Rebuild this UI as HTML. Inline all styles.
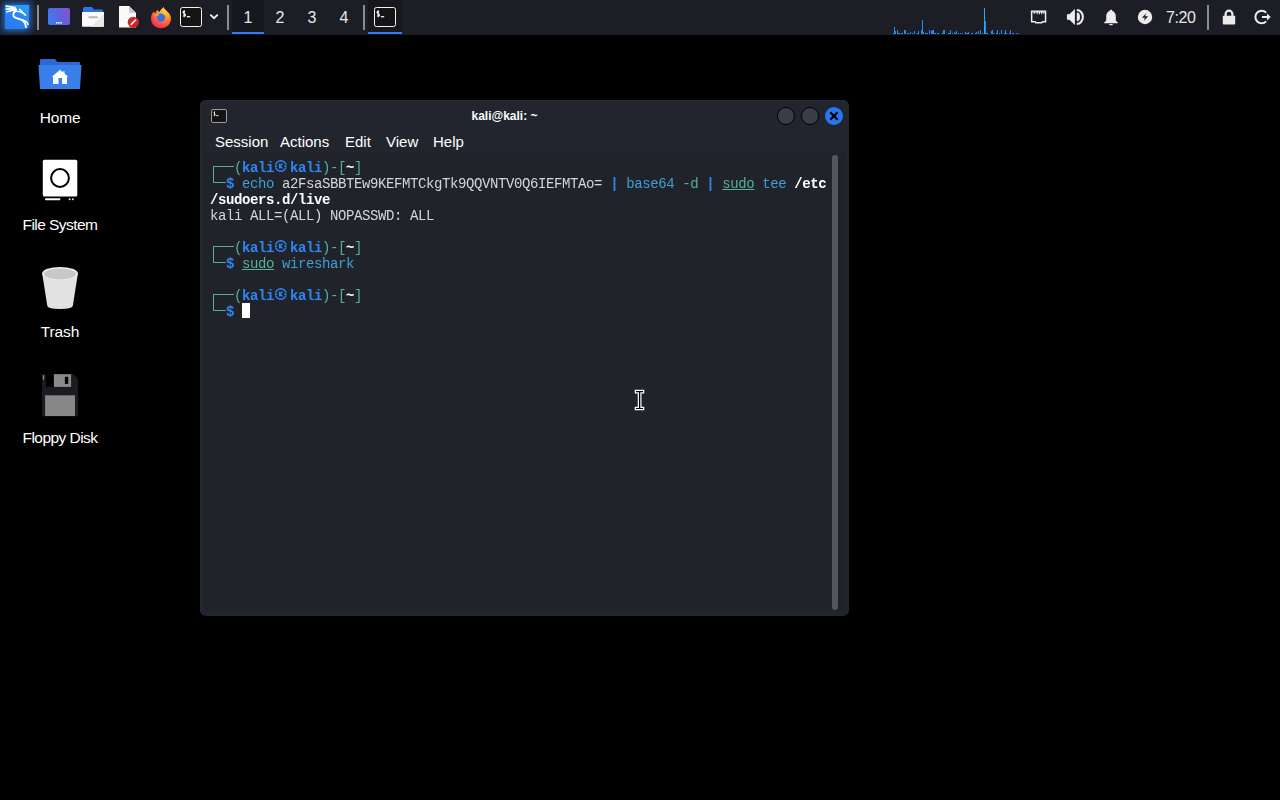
<!DOCTYPE html>
<html><head><meta charset="utf-8">
<style>
*{margin:0;padding:0;box-sizing:border-box}
html,body{width:1280px;height:800px;overflow:hidden;background:#000;font-family:"Liberation Sans",sans-serif}
.abs{position:absolute}
svg{position:absolute;overflow:visible}
#panel{position:absolute;left:0;top:0;width:1280px;height:35px;background:#1d1e25}
.sep{position:absolute;top:5px;width:2px;height:25px;background:#8c8c8c}
.ws{position:absolute;top:0;width:32px;height:35px;color:#e8e8e8;font-size:16px;text-align:center;line-height:35px}
.ws.act{background:#17181d}
.uline{position:absolute;top:32px;height:2px;background:#2f7cf6}
.dl{position:absolute;color:#fff;font-size:15.5px;letter-spacing:-0.15px;text-align:center;width:120px;left:0}
#win{position:absolute;left:200px;top:100px;width:649px;height:515.5px;background:#23252e;border-radius:6px;box-shadow:inset 1px 1px 0 #272a33, 0 0 1px 0 rgba(0,0,0,.6)}
#title{position:absolute;left:200px;top:101px;width:609px;text-align:center;color:#fff;font-weight:bold;font-size:12px;line-height:30px}
.menu{position:absolute;top:133px;color:#fff;font-size:15px}
#term{position:absolute;left:205px;top:153px;width:641px;height:458px;background:#21232b;border-top:1px solid #1f2027}
#txt{position:absolute;left:210px;top:160px;font-family:"Liberation Mono",monospace;font-size:14px;letter-spacing:-0.4px;line-height:16px;white-space:pre;color:#d6d6d6;will-change:transform}
.g{color:#55b095}.b{color:#2f86f5;font-weight:bold}.w{color:#fff;font-weight:bold}
.kk{display:inline-block;width:16px;height:1px}
.bx{position:absolute;background:#55b095}
.cmd{color:#3d9fd6}.pipe{color:#2f86f5;font-weight:bold}.opt{color:#55b095}.u{text-decoration:underline;color:#55b095}
</style></head><body>
<div id="panel">
  <div class="abs" style="left:5px;top:5px;width:24px;height:24px;background:linear-gradient(200deg,#25a2fa,#2a80f2 60%,#2a7cf0);border-radius:0 0 4px 0;box-shadow:0 0 6px 1.5px rgba(40,125,240,.8)"></div>
  <svg style="left:2px;top:2px" width="30" height="30" viewBox="0 0 30 30" fill="none" stroke="#fff" stroke-linecap="round">
    <path d="M4.3 4.2L13 5.6M4.3 7.2L13 6.6M5 9.8L13.2 7.6" stroke-width="1.7"/>
    <path d="M13 6.6C15.5 7.5 13.5 8.5 12 10.5C10.3 13 11.3 15.8 15.5 16.4C20.5 17.2 23.8 19.5 24 25" stroke-width="2"/>
    <path d="M20.5 17.6C23.5 18.6 25.6 20 26 22.4" stroke-width="1.5"/>
    <path d="M17.6 7.3L23.6 13.3M14.8 9.2C18.5 9.4 21.5 11.2 23.6 13.3" stroke-width="1.5"/>
  </svg>
  <div class="sep" style="left:37px"></div>
  <div class="abs" style="left:48px;top:8px;width:22px;height:17px;border-radius:2px;background:linear-gradient(65deg,#3a7ef2,#5d64dc 55%,#8a50cc)"></div>
  <svg style="left:48px;top:8px" width="22" height="17" viewBox="0 0 22 17" fill="#fff"><circle cx="8.8" cy="14.8" r="0.85"/><circle cx="11" cy="14.8" r="0.85"/><circle cx="13.2" cy="14.8" r="0.85"/></svg>
  <svg style="left:80px;top:5px" width="26" height="24" viewBox="0 0 26 24">
    <path d="M3 3.5Q3 2 4.5 2H12L14 4.5H22Q23 4.5 23 5.5V8H3Z" fill="#2f72e6"/>
    <path d="M2 7H24V20.7Q24 21.7 23 21.7H3Q2 21.7 2 20.7Z" fill="#fafafa"/>
    <path d="M24 9L11 21.7H23Q24 21.7 24 20.7Z" fill="#e9e9e9"/>
    <rect x="8.3" y="11.2" width="9.7" height="2" rx="1" fill="#b8b8b8"/>
  </svg>
  <svg style="left:118px;top:5px" width="22" height="24" viewBox="0 0 22 24">
    <path d="M1 1.5Q1 1 1.5 1H11L18 8V22Q18 22.5 17.5 22.5H1.5Q1 22.5 1 22Z" fill="#fafafa"/>
    <path d="M11 1L18 8H12Q11 8 11 7Z" fill="#c9c9c9"/>
    <circle cx="15.3" cy="17.3" r="5.6" fill="#d42323"/>
    <path d="M13.2 19.4L17.6 15" stroke="#fff" stroke-width="1.6" stroke-linecap="round"/>
  </svg>
  <svg style="left:149px;top:5px" width="24" height="24" viewBox="0 0 24 24">
    <defs>
      <radialGradient id="ffr" cx="0.7" cy="0.15" r="1"><stop offset="0" stop-color="#ffd84a"/><stop offset="0.45" stop-color="#ff8a2a"/><stop offset="0.8" stop-color="#f5394d"/><stop offset="1" stop-color="#e3245e"/></radialGradient>
    </defs>
    <path d="M12 23.2C6.2 23.2 2 19 2 13.5C2 10.5 3.2 8 5 6.3C5.3 7.6 6 8.3 6.7 8.5C6.8 6.8 7.6 5.6 8.5 5C9 6 9.6 6.6 10.4 7C11.5 5 13 3.6 14.6 2C15.4 4 17.2 5.4 18.8 7C21 9 22 11.3 22 13.5C22 19 17.8 23.2 12 23.2Z" fill="url(#ffr)"/>
    <circle cx="12" cy="12.6" r="4.2" fill="#3b6fe0"/>
    <path d="M4.3 10.8C6.5 10 9 10 10.6 11.2C9.6 9.7 8 9.3 6.5 9.2" fill="#ffb52a"/>
  </svg>
  <div class="abs" style="left:180px;top:7px;width:22px;height:20px;border:1.5px solid #f2f2f2;border-radius:2.5px;background:#141414"></div>
  <svg style="left:180px;top:7px" width="22" height="20" viewBox="0 0 22 20" fill="none" stroke="#f2f2f2"><path d="M5.1 4.6Q3.6 3.9 3.1 4.9Q2.8 6 4.2 6.6Q5.6 7.2 5.4 8.4Q5 9.6 3 8.8M4.2 3.2V10.2" stroke-width="1.2"/><path d="M6.8 9.7H10.2" stroke-width="1.3"/></svg>
  <svg style="left:209px;top:13px" width="10" height="8" viewBox="0 0 10 8"><path d="M1.3 1.6L5 5.2L8.7 1.6" fill="none" stroke="#f0f0f0" stroke-width="1.8"/></svg>
  <div class="sep" style="left:227px"></div>
  <div class="ws act" style="left:232px">1</div>
  <div class="ws" style="left:264px">2</div>
  <div class="ws" style="left:296px">3</div>
  <div class="ws" style="left:328px">4</div>
  <div class="uline" style="left:232px;width:32px"></div>
  <div class="sep" style="left:363px"></div>
  <div class="ws act" style="left:368px;width:34px"></div>
  <div class="uline" style="left:368px;width:34px"></div>
  <div class="abs" style="left:374px;top:7px;width:22px;height:20px;border:1.5px solid #f2f2f2;border-radius:2.5px;background:#141414"></div>
  <svg style="left:374px;top:7px" width="22" height="20" viewBox="0 0 22 20" fill="none" stroke="#f2f2f2"><path d="M5.1 4.6Q3.6 3.9 3.1 4.9Q2.8 6 4.2 6.6Q5.6 7.2 5.4 8.4Q5 9.6 3 8.8M4.2 3.2V10.2" stroke-width="1.2"/><path d="M6.8 9.7H10.2" stroke-width="1.3"/></svg>
  <svg style="left:890px;top:0" width="140" height="35" viewBox="0 0 140 35" fill="#2a86f2"><rect x="3" y="33" width="1" height="1"/><rect x="4" y="27" width="1" height="7"/><rect x="5" y="31" width="1" height="3"/><rect x="7" y="30" width="1" height="4"/><rect x="8" y="33" width="1" height="1"/><rect x="9" y="33" width="1" height="1"/><rect x="11" y="33" width="1" height="1"/><rect x="12" y="33" width="1" height="1"/><rect x="14" y="30" width="1" height="4"/><rect x="15" y="30" width="1" height="4"/><rect x="17" y="33" width="1" height="1"/><rect x="18" y="33" width="1" height="1"/><rect x="20" y="32" width="1" height="2"/><rect x="22" y="33" width="1" height="1"/><rect x="24" y="31" width="1" height="3"/><rect x="27" y="33" width="1" height="1"/><rect x="28" y="31" width="1" height="3"/><rect x="31" y="30" width="1" height="4"/><rect x="32" y="20" width="1" height="14"/><rect x="33" y="32" width="1" height="2"/><rect x="35" y="33" width="1" height="1"/><rect x="36" y="33" width="1" height="1"/><rect x="37" y="33" width="1" height="1"/><rect x="39" y="30" width="1" height="4"/><rect x="41" y="31" width="1" height="3"/><rect x="42" y="30" width="1" height="4"/><rect x="43" y="30" width="1" height="4"/><rect x="44" y="33" width="1" height="1"/><rect x="45" y="33" width="1" height="1"/><rect x="47" y="33" width="1" height="1"/><rect x="48" y="33" width="1" height="1"/><rect x="52" y="33" width="1" height="1"/><rect x="53" y="30" width="1" height="4"/><rect x="54" y="30" width="1" height="4"/><rect x="58" y="33" width="1" height="1"/><rect x="59" y="33" width="1" height="1"/><rect x="60" y="30" width="1" height="4"/><rect x="62" y="33" width="1" height="1"/><rect x="64" y="32" width="1" height="2"/><rect x="65" y="33" width="1" height="1"/><rect x="66" y="31" width="1" height="3"/><rect x="68" y="33" width="1" height="1"/><rect x="70" y="33" width="1" height="1"/><rect x="72" y="33" width="1" height="1"/><rect x="75" y="32" width="1" height="2"/><rect x="76" y="33" width="1" height="1"/><rect x="77" y="33" width="1" height="1"/><rect x="78" y="32" width="1" height="2"/><rect x="81" y="33" width="1" height="1"/><rect x="82" y="33" width="1" height="1"/><rect x="85" y="33" width="1" height="1"/><rect x="86" y="32" width="1" height="2"/><rect x="88" y="31" width="1" height="3"/><rect x="90" y="30" width="1" height="4"/><rect x="92" y="33" width="1" height="1"/><rect x="94" y="8" width="1" height="26" fill="#22b0ec"/><rect x="95" y="21" width="1" height="13"/><rect x="96" y="33" width="1" height="1"/><rect x="97" y="33" width="1" height="1"/><rect x="101" y="31" width="1" height="3"/><rect x="102" y="30" width="1" height="4"/><rect x="103" y="33" width="1" height="1"/><rect x="106" y="33" width="1" height="1"/><rect x="107" y="30" width="1" height="4"/><rect x="109" y="33" width="1" height="1"/><rect x="111" y="30" width="1" height="4"/><rect x="114" y="33" width="1" height="1"/><rect x="115" y="30" width="1" height="4"/><rect x="116" y="33" width="1" height="1"/><rect x="119" y="33" width="1" height="1"/><rect x="120" y="30" width="1" height="4"/><rect x="122" y="33" width="1" height="1"/><rect x="123" y="33" width="1" height="1"/><rect x="126" y="33" width="1" height="1"/><rect x="128" y="33" width="1" height="1"/></svg>
  <svg style="left:1029px;top:9px" width="20" height="16" viewBox="0 0 20 16" fill="none" stroke="#ececec" stroke-width="1.5">
    <path d="M2.65 2.15H16.55V12.75H13.5L12.7 13.85H6.9L6.1 12.75H2.65Z"/>
    <path d="M3.4 3.3H15.8" stroke-width="1" stroke="#aaa"/>
    <path d="M8.15 2.8V5.2M10.45 2.8V5.2M12.75 2.8V5.2M5.4 2.8V4.8M14.9 2.8V4.8" stroke-width="1.1"/>
  </svg>
  <svg style="left:1062px;top:6px" width="26" height="22" viewBox="0 0 26 22">
    <path d="M4.95 8.25H7.4L12.9 3.1V18.9L7.4 13.75H4.95Z" fill="#ececec"/>
    <path d="M14.8 6.6A3.2 4.35 0 0 1 14.8 15.3Z" fill="#ececec"/>
    <path d="M14.8 4A6.05 7 0 0 1 14.8 18" fill="none" stroke="#ececec" stroke-width="2.1"/>
  </svg>
  <svg style="left:1102px;top:8px" width="18" height="18" viewBox="0 0 18 18">
    <path d="M9 1.8C9.8 1.8 10.3 2.3 10.4 3C12.6 3.7 13.8 5.6 13.8 8.2V12.5L15.8 14.6V15.2H2.2V14.6L4.2 12.5V8.2C4.2 5.6 5.4 3.7 7.6 3C7.7 2.3 8.2 1.8 9 1.8Z" fill="#ececec"/>
    <path d="M7.3 16.6H10.7" stroke="#ececec" stroke-width="1.2"/>
  </svg>
  <svg style="left:1137px;top:9px" width="16" height="16" viewBox="0 0 16 16">
    <circle cx="8" cy="8" r="7.2" fill="#ececec"/>
    <path d="M9.2 4.2L4.9 8.8H7.9L6.9 11.9L11.2 7.2H8.1Z" fill="#1d1e25"/>
  </svg>
  <div class="abs" style="left:1166px;top:9px;color:#e8e8e8;font-size:16px;letter-spacing:-0.4px">7:20</div>
  <div class="sep" style="left:1207px"></div>
  <svg style="left:1221px;top:8px" width="16" height="18" viewBox="0 0 16 18">
    <path d="M4.6 8.4V6.1A3.4 3.4 0 0 1 11.4 6.1V8.4" fill="none" stroke="#ececec" stroke-width="2.2"/>
    <rect x="1.8" y="7.8" width="12.4" height="8.8" rx="0.8" fill="#ececec"/>
  </svg>
  <svg style="left:1252px;top:8px" width="22" height="18" viewBox="0 0 22 18">
    <path d="M14.2 4.6A6.3 6.3 0 1 0 14.2 13.4" fill="none" stroke="#ececec" stroke-width="2"/>
    <path d="M10 9H16" stroke="#ececec" stroke-width="2"/>
    <path d="M15 5.4L18.8 9L15 12.6Z" fill="#ececec"/>
  </svg>
</div>

<svg style="left:34px;top:52px" width="52" height="44" viewBox="0 0 52 44">
  <path d="M6 8Q6 7 7 7H21L23.5 10H45Q46 10 46 11V14H6Z" fill="#2d68d4"/>
  <path d="M4.5 13H47.5L46 37H6Z" fill="#3a7ee9"/>
  <path d="M26 17.8L17.8 24.8H19V32H24.5V26H28V32H33V24.8H34.2L30.5 21.6V19.2H29.3V20.6Z" fill="#fff"/>
</svg>
<div class="dl" style="top:109px">Home</div>

<svg style="left:36px;top:154px" width="48" height="52" viewBox="0 0 48 52">
  <rect x="6.8" y="5.7" width="34.5" height="36.9" rx="1.6" fill="#fff"/>
  <circle cx="24" cy="24" r="8.9" fill="none" stroke="#000" stroke-width="2"/>
  <rect x="9" y="44.2" width="15.4" height="2" rx="1" fill="#fff"/>
  <circle cx="33.6" cy="45.2" r="1" fill="#ddd"/><circle cx="36.8" cy="45.2" r="1" fill="#ddd"/>
</svg>
<div class="dl" style="top:215.5px;letter-spacing:-0.55px">File System</div>

<svg style="left:36px;top:262px" width="48" height="52" viewBox="0 0 48 52">
  <path d="M6.2 11.5L11.3 44Q12 47 24 47Q36 47 36.8 44L41.9 11.5Z" fill="#e2e2e2"/>
  <ellipse cx="24" cy="11.6" rx="17.9" ry="6.7" fill="#ececec"/>
  <ellipse cx="24" cy="12" rx="16" ry="5.4" fill="#c8c8c8"/>
</svg>
<div class="dl" style="top:322.5px">Trash</div>

<svg style="left:36px;top:368px" width="48" height="52" viewBox="0 0 48 52">
  <path d="M6 6H37L42 11V48H6Z" fill="#1b1c21"/>
  <rect x="9.8" y="6.2" width="8.1" height="12.7" fill="#000"/>
  <rect x="17.9" y="6.2" width="17.2" height="12.7" fill="#8a8a8a"/>
  <rect x="28.9" y="8.8" width="3.3" height="7.1" fill="#000"/>
  <rect x="9.1" y="27.3" width="29.9" height="20.8" fill="#878787"/>
  <rect x="6.8" y="7.2" width="1.3" height="4.5" fill="#8a8a8a"/>
</svg>
<div class="dl" style="top:429px;letter-spacing:-0.55px">Floppy Disk</div>

<div id="win"></div>
<div class="abs" style="left:211px;top:109px;width:16px;height:14px;border:1.5px solid #9c9c9c;border-radius:2px;background:#141414"></div>
<svg style="left:211px;top:109px" width="16" height="14" viewBox="0 0 16 14" fill="none" stroke="#e6e6e6"><path d="M4 3.2Q3 2.8 2.8 3.6Q2.8 4.3 3.6 4.6Q4.4 5 4.2 5.8Q3.9 6.6 2.7 6.2M3.5 2.3V7.2" stroke-width="0.9"/><path d="M4.8 6.6H7.6" stroke-width="0.9"/></svg>
<div id="title">kali@kali: ~</div>
<svg style="left:770px;top:102px" width="80" height="28" viewBox="0 0 80 28">
  <circle cx="15.9" cy="14" r="8.5" fill="#3a3d4a" stroke="#000" stroke-width="1"/>
  <circle cx="40" cy="14" r="8.5" fill="#3a3d4a" stroke="#000" stroke-width="1"/>
  <circle cx="64" cy="14" r="9" fill="#2777f0"/>
  <path d="M60.3 10.3L67.7 17.7M67.7 10.3L60.3 17.7" stroke="#000" stroke-width="2.2"/>
</svg>
<div class="menu" style="left:215px">Session</div>
<div class="menu" style="left:280px">Actions</div>
<div class="menu" style="left:345px">Edit</div>
<div class="menu" style="left:386px">View</div>
<div class="menu" style="left:433px">Help</div>
<div id="term"></div>
<div class="abs" style="left:832px;top:155px;width:6px;height:455px;border-radius:3px;background:#55565c"></div>
<div id="txt"><span class="g">   (</span><span class="b">kali<span class="kk"></span>kali</span><span class="g">)-[</span><span class="w">~</span><span class="g">]</span>
  <span class="b">$</span> <span class="cmd">echo</span> a2FsaSBBTEw9KEFMTCkgTk9QQVNTV0Q6IEFMTAo= <span class="pipe">|</span> <span class="cmd">base64</span> <span class="opt">-d</span> <span class="pipe">|</span> <span class="u">sudo</span> <span class="cmd">tee</span> <span class="w">/etc</span>
<span class="w">/sudoers.d/live</span>
kali ALL=(ALL) NOPASSWD: ALL

<span class="g">   (</span><span class="b">kali<span class="kk"></span>kali</span><span class="g">)-[</span><span class="w">~</span><span class="g">]</span>
  <span class="b">$</span> <span class="u">sudo</span> <span class="cmd">wireshark</span>

<span class="g">   (</span><span class="b">kali<span class="kk"></span>kali</span><span class="g">)-[</span><span class="w">~</span><span class="g">]</span>
  <span class="b">$</span> </div>
<div class="bx" style="left:213px;top:166px;width:1.4px;height:17px"></div>
<div class="bx" style="left:213px;top:166px;width:21px;height:1.4px"></div>
<div class="bx" style="left:213px;top:182px;width:13px;height:1.4px"></div>
<svg style="left:274px;top:158px" width="16" height="16" viewBox="0 0 16 16"><circle cx="6.8" cy="8" r="5.3" fill="none" stroke="#2f86f5" stroke-width="1.5"/><path d="M0.8 7.1H13M0.8 9.1H13" stroke="#21232b" stroke-width="0.8"/><path d="M1.3 8.1H3.4M10.2 8.1H12.3" stroke="#2f86f5" stroke-width="1.1"/><path d="M5.6 5.5v5M8.5 5.5L5.9 8.1l2.6 2.4" stroke="#2f86f5" stroke-width="1.3" fill="none"/></svg>
<div class="bx" style="left:213px;top:246px;width:1.4px;height:17px"></div>
<div class="bx" style="left:213px;top:246px;width:21px;height:1.4px"></div>
<div class="bx" style="left:213px;top:262px;width:13px;height:1.4px"></div>
<svg style="left:274px;top:238px" width="16" height="16" viewBox="0 0 16 16"><circle cx="6.8" cy="8" r="5.3" fill="none" stroke="#2f86f5" stroke-width="1.5"/><path d="M0.8 7.1H13M0.8 9.1H13" stroke="#21232b" stroke-width="0.8"/><path d="M1.3 8.1H3.4M10.2 8.1H12.3" stroke="#2f86f5" stroke-width="1.1"/><path d="M5.6 5.5v5M8.5 5.5L5.9 8.1l2.6 2.4" stroke="#2f86f5" stroke-width="1.3" fill="none"/></svg>
<div class="bx" style="left:213px;top:294px;width:1.4px;height:17px"></div>
<div class="bx" style="left:213px;top:294px;width:21px;height:1.4px"></div>
<div class="bx" style="left:213px;top:310px;width:13px;height:1.4px"></div>
<svg style="left:274px;top:286px" width="16" height="16" viewBox="0 0 16 16"><circle cx="6.8" cy="8" r="5.3" fill="none" stroke="#2f86f5" stroke-width="1.5"/><path d="M0.8 7.1H13M0.8 9.1H13" stroke="#21232b" stroke-width="0.8"/><path d="M1.3 8.1H3.4M10.2 8.1H12.3" stroke="#2f86f5" stroke-width="1.1"/><path d="M5.6 5.5v5M8.5 5.5L5.9 8.1l2.6 2.4" stroke="#2f86f5" stroke-width="1.3" fill="none"/></svg>
<div class="abs" style="left:242px;top:303px;width:8px;height:15px;background:#fff"></div>
<svg style="left:630px;top:388px" width="20" height="24" viewBox="0 0 20 24">
  <path d="M5.35 2.35H13.65V4.9H10.9V19.4H13.65V21.65H5.35V19.4H8.35V4.9H5.35Z" fill="#000" stroke="#fff" stroke-width="1.2"/>
</svg>
</body></html>
